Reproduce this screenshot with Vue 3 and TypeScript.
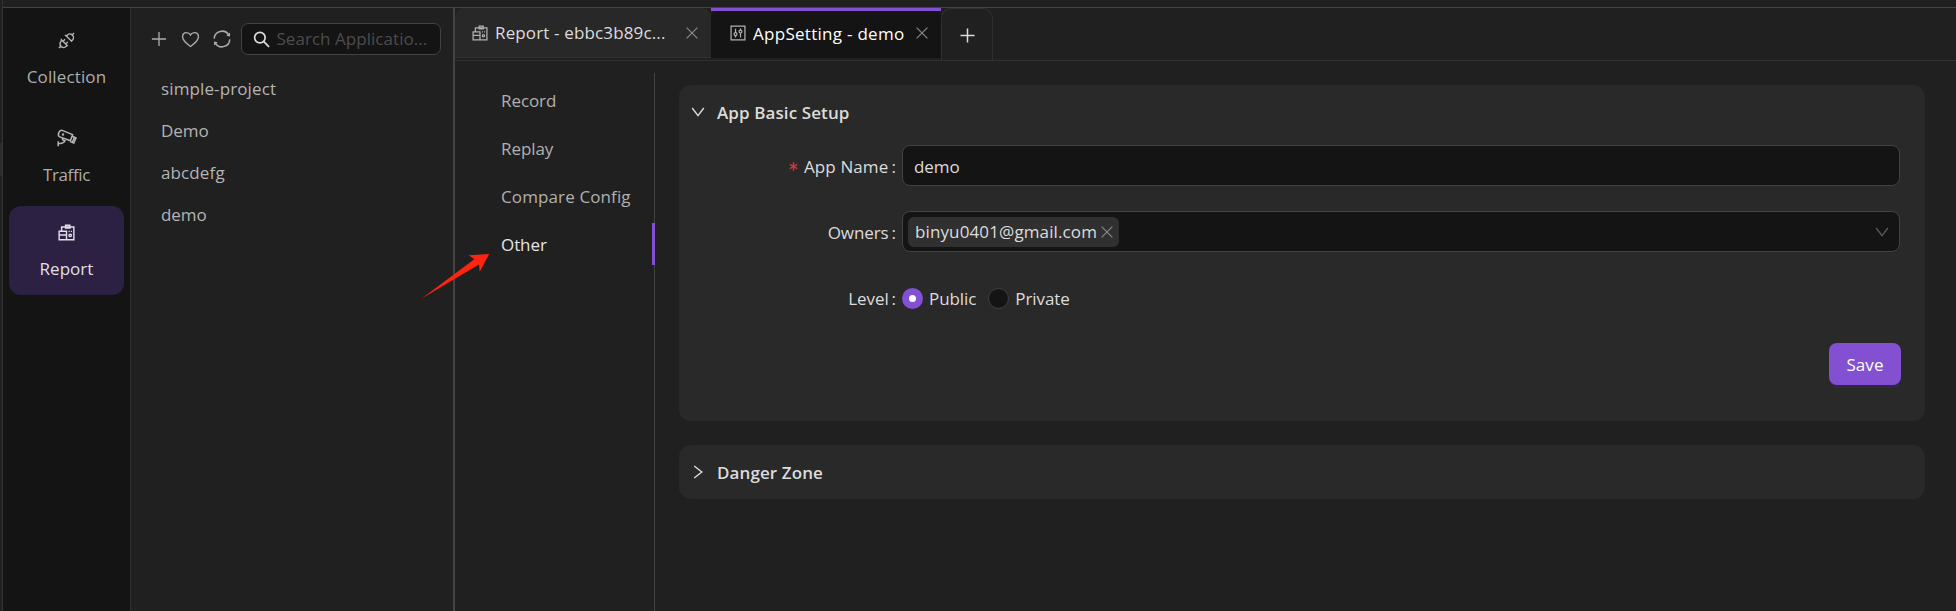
<script setup lang="ts">
import { ref } from 'vue'

type Glyph = 'plug' | 'camera' | 'report'
interface NavEntry { label: string; glyph: Glyph; cls: string }

const nav: NavEntry[] = [
  { label: 'Collection', glyph: 'plug', cls: 'collection' },
  { label: 'Traffic', glyph: 'camera', cls: 'traffic' },
  { label: 'Report', glyph: 'report', cls: 'report' },
]
const apps: string[] = ['simple-project', 'Demo', 'abcdefg', 'demo']
const sections: string[] = ['Record', 'Replay', 'Compare Config', 'Other']

const activeNav = ref('Report')
const activeSection = ref('Other')
const level = ref('Public')
</script>

<template>
  <div class="page">
    <div class="edge"><span class="edge-mark"></span></div>
    <div class="frame">
      <nav class="rail">
        <div
          v-for="item in nav"
          :key="item.label"
          class="rail-item"
          :class="[item.cls, { active: item.label === activeNav }]"
          @click="activeNav = item.label"
        >
          <svg v-if="item.glyph === 'plug'" class="rail-icon" viewBox="0 0 18 18">
            <path d="M1 17 3.6 14.4M14.4 3.6 17 1M3.6 8.2 9.8 14.4 8.4 15.4a3.7 3.7 0 0 1-5-5.6zM8.2 3.6 14.4 9.8 15.4 8.4a3.7 3.7 0 0 0-5.6-5zM5.7 9.4 7.4 7.7M8.6 12.3 10.3 10.6" />
          </svg>
          <svg v-else-if="item.glyph === 'camera'" class="rail-icon cam" viewBox="0 0 20 18">
            <path d="M5.2 1.4 15.6 5.6 13.4 11.7 2.2 7.6C.3 6 2.1.6 5.2 1.4zM15.2 7.2 19 8.9 16.8 14.1 13.2 12.5M15.4 13.3 17.4 8.3M5.4 9.2C5.2 11.5 7.9 11.7 7.9 11.7 7 14.2 4.6 14.6 1.2 14.6M1.2 12.2V17.2" />
            <circle cx="6" cy="5.6" r=".5" />
          </svg>
          <svg v-else class="rail-icon" viewBox="0 0 18 18">
            <path d="M3.8 7.2V3.2H16.8V16.6H9.6M1.2 7.7H9V16.6H1.2zM1.2 11.6H9M8 3.2V1.4H12.6V4.4H8z" />
            <path d="M11.2 7.8H12.4M13.6 7.8H14.8" />
            <circle cx="12.9" cy="12" r="1.3" />
          </svg>
          <span class="rail-label">{{ item.label }}</span>
        </div>
      </nav>

      <aside class="apps">
        <div class="apps-tools">
          <svg class="tool" viewBox="0 0 18 18"><path d="M9 1V17M1 9H17" /></svg>
          <svg class="tool heart" viewBox="0 0 20 18">
            <path d="M10 16.4C6 13.6 1.6 10.3 1.6 6.2 1.6 3.4 3.5 1.7 5.8 1.7 7.7 1.7 9.2 2.8 10 4.2 10.8 2.8 12.3 1.7 14.2 1.7 16.5 1.7 18.4 3.4 18.4 6.2 18.4 10.3 14 13.6 10 16.4z" />
          </svg>
          <svg class="tool sync" viewBox="0 0 18 18">
            <path d="M1.2 8.6A7.8 7.8 0 0 1 15.8 5.2M16.8 9.4A7.8 7.8 0 0 1 2.2 12.8" />
            <path class="solid" d="M17 2.6V6.4L13.3 5.7zM1 15.4V11.6L4.7 12.3z" />
          </svg>
          <div class="search">
            <svg viewBox="0 0 18 18"><circle cx="7.3" cy="7" r="5.6" /><path d="M11.2 11 17 16.8" /></svg>
            <span>Search Applicatio...</span>
          </div>
        </div>
        <ul class="app-list">
          <li v-for="name in apps" :key="name" :class="{ wide: name.length > 5 }">{{ name }}</li>
        </ul>
      </aside>

      <main class="work">
        <div class="tabs">
          <div class="tab first">
            <svg class="tab-icon" viewBox="0 0 18 18">
              <path d="M3.8 7.2V3.2H16.8V16.6H9.6M1.2 7.7H9V16.6H1.2zM1.2 11.6H9M8 3.2V1.4H12.6V4.4H8z" />
              <path d="M11.2 7.8H12.4M13.6 7.8H14.8" />
              <circle cx="12.9" cy="12" r="1.3" />
            </svg>
            <span class="tab-text">Report - ebbc3b89c...</span>
            <svg class="close" viewBox="0 0 12 12"><path d="M.6 .6 11.4 11.4M11.4 .6 .6 11.4" /></svg>
          </div>
          <div class="tab current">
            <svg class="tab-icon" viewBox="0 0 18 18">
              <path d="M1.2 1.2H16.8V16.8H1.2zM6.2 4.2V8.6M6.2 12V14M11.8 4V5.8M11.8 9.2V14" />
              <circle cx="6.2" cy="10.3" r="1.6" /><circle cx="11.8" cy="7.4" r="1.6" />
            </svg>
            <span class="tab-text">AppSetting - demo</span>
            <svg class="close" viewBox="0 0 12 12"><path d="M.6 .6 11.4 11.4M11.4 .6 .6 11.4" /></svg>
          </div>
          <div class="tab-add">
            <svg viewBox="0 0 16 16"><path d="M8 .5V15.5M.5 8H15.5" /></svg>
          </div>
        </div>

        <div class="body">
          <ul class="sections">
            <li
              v-for="s in sections"
              :key="s"
              :class="{ on: s === activeSection, wide: s.length > 8 }"
              @click="activeSection = s"
            ><span>{{ s }}</span></li>
          </ul>

          <div class="panels">
            <section class="card basic">
              <header class="card-head">
                <svg class="chev" viewBox="0 0 14 14"><path d="M1.2 3 7 10.6 12.8 3" /></svg>
                <h3>App Basic Setup</h3>
              </header>
              <div class="row">
                <label class="wide"><svg class="star" viewBox="0 0 10 10"><path d="M5 .2V9.8M.8 2.6 9.2 7.4M9.2 2.6 .8 7.4" /></svg>App Name<i>:</i></label>
                <div class="field name">demo</div>
              </div>
              <div class="row">
                <label>Owners<i>:</i></label>
                <div class="field select">
                  <span class="tag">
                    <span class="mail">binyu0401@gmail.com</span>
                    <svg class="close" viewBox="0 0 12 12"><path d="M.6 .6 11.4 11.4M11.4 .6 .6 11.4" /></svg>
                  </span>
                  <svg class="down" viewBox="0 0 14 14"><path d="M1.2 3 7 10.6 12.8 3" /></svg>
                </div>
              </div>
              <div class="row level">
                <label>Level<i>:</i></label>
                <div class="radios">
                  <span v-for="o in ['Public', 'Private']" :key="o" class="radio" @click="level = o">
                    <b :class="{ checked: level === o }"></b><span>{{ o }}</span>
                  </span>
                </div>
              </div>
              <div class="actions"><button type="button">Save</button></div>
            </section>

            <section class="card danger">
              <header class="card-head">
                <svg class="chev" viewBox="0 0 14 14"><path d="M3.2 1 10.8 7 3.2 13" /></svg>
                <h3>Danger Zone</h3>
              </header>
            </section>
          </div>
        </div>
      </main>
    </div>

    <svg class="pointer" viewBox="0 0 70 46">
      <path d="M.3 44.8 53.3 5.2 47.7 1.2 68.2 0 58.8 17.8 58 10.4z" />
    </svg>
  </div>
</template>

<style>
html, body { margin: 0; background: #202020; overflow: hidden; }
</style>

<style scoped>
* { box-sizing: border-box; }
.page {
  position: relative;
  display: flex;
  width: 1956px;
  height: 611px;
  overflow: hidden;
  background: #202020;
  color: #dcdcdc;
  font: 17px/26px "Open Sans", "Noto Sans", sans-serif;
  letter-spacing: -0.08px;
  white-space: nowrap;
}
svg { display: block; flex: none; fill: none; stroke: currentColor; stroke-width: 1.5; overflow: visible; }
ul { list-style: none; margin: 0; padding: 0; }
.wide { letter-spacing: 0.12px; }

.edge { width: 3px; flex: none; border-right: 1px solid #333; padding-top: 143px; }
.edge-mark { display: block; width: 2px; height: 33px; background: #2d2c32; }
.frame { display: flex; flex: 1; margin-top: 7px; border-top: 1px solid #434343; min-width: 0; }

.rail { width: 128px; flex: none; background: #141414; border-right: 1px solid #303030; padding: 6px 6px 0; }
.rail-item {
  display: flex; flex-direction: column; align-items: center;
  width: 115px; height: 89px; padding-top: 18px; border-radius: 12px; color: #acacac;
}
.rail-item.collection { letter-spacing: 0.12px; }
.rail-item.traffic { margin-top: 8px; letter-spacing: -0.35px; }
.rail-item.report { margin-top: 6px; letter-spacing: 0.05px; }
.rail-item.active { background: #2c2142; color: #e2dfe6; }
.rail-icon { width: 17px; height: 17px; color: #b5b5b5; }
.rail-icon.cam { width: 20px; height: 18px; }
.active .rail-icon { color: #e2dfe6; }
.rail-label { margin-top: 15px; }

.apps { width: 324px; flex: none; border-right: 2px solid #434343; }
.apps-tools { display: flex; align-items: center; padding: 15px 0 0 20px; color: #acacac; }
.tool { width: 16px; height: 16px; }
.tool.heart { width: 19px; height: 17px; margin-left: 14px; }
.tool.sync { width: 18px; height: 18px; margin-left: 12.5px; }
.solid { fill: currentColor; stroke: none; }
.search {
  display: flex; align-items: center; width: 200px; height: 32px; margin-left: 10px; padding-left: 11px;
  border: 1px solid #424242; border-radius: 7px; background: #141414; color: #4c4c4c; letter-spacing: 0.04px;
}
.search svg { width: 17px; height: 17px; margin-right: 7px; color: #dcdcdc; stroke-width: 1.8; }
.app-list { padding: 13px 0 0 30px; color: #b4b4b4; }
.app-list li { height: 42px; line-height: 42px; }

.work { display: flex; flex-direction: column; flex: 1; min-width: 0; }
.tabs { display: flex; height: 53px; flex: none; border-bottom: 1px solid #303030; }
.tab { display: flex; align-items: center; height: 50px; border-radius: 9px 9px 0 0; }
.tab.first { width: 256px; padding-left: 17px; background: #282828; border-bottom: 1px solid #303030; }
.tab.current { position: relative; width: 230px; padding-left: 19px; background: #141414; color: #fff; }
.tab.current::before { content: ""; position: absolute; left: 0; top: 0; width: 100%; height: 3px; background: #8250d0; }
.tab-icon { width: 16px; height: 16px; color: #b0b0b0; stroke-width: 1.4; }
.tab-text { margin-left: 7px; padding-top: 1px; }
.first .tab-text { width: 191px; letter-spacing: 0.14px; }
.current .tab-text { width: 163px; letter-spacing: 0.28px; }
.close { width: 12px; height: 12px; color: #888; stroke-width: 1.2; }
.tab-add {
  display: flex; align-items: center; justify-content: center; width: 52px; height: 52px; padding-top: 2px;
  border: 1px solid #303030; border-bottom: 0; border-radius: 10px 10px 0 0;
}
.tab-add svg { width: 15px; height: 15px; stroke-width: 1.6; }

.body { display: flex; flex: 1; padding-top: 12px; }
.sections { width: 200px; flex: none; padding-top: 6px; border-right: 1px solid #434343; color: #b0b0b0; }
.sections li { height: 42px; line-height: 42px; margin: 0 -1px 6px 0; padding: 1px 0 0 46px; border-right: 3px solid transparent; }
.sections li.on { color: #e6e6e6; border-right-color: #8250d0; }

.panels { flex: 1; padding: 12px 31px 0 24px; }
.card { border-radius: 12px; background: #292929; }
.basic { height: 336px; }
.danger { height: 54px; margin-top: 24px; }
.card-head { display: flex; align-items: center; height: 54px; padding-left: 12px; }
.chev { width: 14px; height: 14px; stroke-width: 1.4; }
h3 { margin: 0 0 0 12px; padding-top: 1px; font-size: 17px; font-weight: 600; letter-spacing: 0.1px; }
.row { display: flex; height: 42px; margin: 6px 25px 24px 0; }
.row + .row { margin-top: 0; }
.row label { display: flex; align-items: center; justify-content: flex-end; width: 223px; padding: 1px 6px 0 0; }
.row i { font-style: normal; margin-left: 3px; }
.star { width: 9px; height: 9px; margin-right: 6px; color: #cc3a3c; stroke-width: 1.6; }
.field {
  display: flex; align-items: center; flex: 1; height: 41px; border: 1px solid #424242; border-radius: 8px; background: #141414;
}
.field.name { padding: 2px 0 0 11px; }
.field.select { justify-content: space-between; padding: 0 10px 0 5px; }
.tag { display: flex; align-items: center; width: 211px; height: 30px; padding-left: 7px; border-radius: 6px; background: #303030; }
.mail { width: 186px; letter-spacing: 0.12px; }
.down { width: 14px; height: 14px; color: #5a5a5a; stroke-width: 1.3; }
.radios { display: flex; align-items: center; }
.radio { display: flex; align-items: center; margin-right: 12px; }
.radio span { padding-top: 1px; }
.radio b { width: 21px; height: 21px; margin-right: 6px; border: 1px solid #424242; border-radius: 50%; background: #141414; }
.radio b.checked { border: 7px solid #8250d0; background: #fff; }
.actions { display: flex; justify-content: flex-end; padding-right: 24px; }
button {
  width: 72px; height: 42px; padding: 1px 0 0; border: 0; border-radius: 8px; background: #8250d0; color: #fff;
  font: inherit; letter-spacing: 0.1px; box-shadow: 0 3px 0 #302740;
}
.pointer { position: absolute; left: 420.5px; top: 254px; width: 70px; height: 46px; fill: #ff2412; stroke: none; }
</style>
